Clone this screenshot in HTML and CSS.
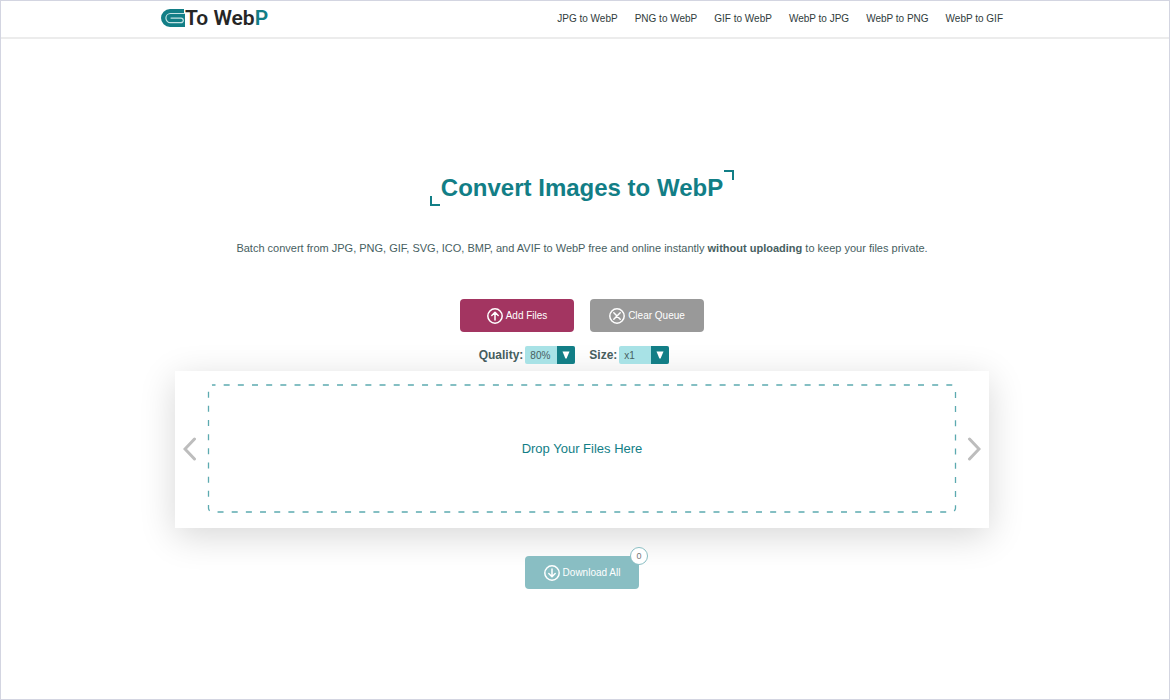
FILE: index.html
```html
<!DOCTYPE html>
<html lang="en">
<head>
<meta charset="utf-8">
<meta name="viewport" content="width=device-width, initial-scale=1">
<title>Convert Images to WebP</title>
<link rel="stylesheet" href="styles.css">
</head>
<body>
<header class="site-header">
  <div class="header-inner">
    <a class="logo" href="#" aria-label="To WebP">
      <svg class="logo-mark" viewBox="0 0 24 18" aria-hidden="true">
        <path d="M9 0H23V4H24V18H9A9 9 0 0 1 9 0Z" fill="#127e86"/>
        <path d="M24 4.500H9.500A4.600 4.600 0 0 0 9.500 13.700H20A2.300 2.300 0 0 0 20 9.100H10" fill="none" stroke="#c4e2e4" stroke-width="1.200" stroke-linecap="round"/>
      </svg>
      <span>To Web<span class="logo-accent">P</span></span>
    </a>
    <nav class="nav">
      <a href="#">JPG to WebP</a>
      <a href="#">PNG to WebP</a>
      <a href="#">GIF to WebP</a>
      <a href="#">WebP to JPG</a>
      <a href="#">WebP to PNG</a>
      <a href="#">WebP to GIF</a>
    </nav>
  </div>
</header>
<main class="main">
  <h1 class="title">Convert Images to WebP</h1>
  <p class="intro">Batch convert from JPG, PNG, GIF, SVG, ICO, BMP, and AVIF to WebP free and online instantly <strong>without uploading</strong> to keep your files private.</p>
  <div class="actions">
    <button class="button button-add" type="button">
      <svg class="icon" viewBox="0 0 16 16" aria-hidden="true"><circle cx="8" cy="8" r="7.200"/><path d="M8 12V4.500M4.800 7.500L8 4.300L11.200 7.500"/></svg>
      Add Files
    </button>
    <button class="button button-clear" type="button">
      <svg class="icon" viewBox="0 0 16 16" aria-hidden="true"><circle cx="8" cy="8" r="7.200"/><path d="M4.800 4.800L11.200 11.200M11.200 4.800L4.800 11.200"/></svg>
      Clear Queue
    </button>
  </div>
  <div class="options">
    <div class="option">
      <label for="quality">Quality:</label>
      <span class="picker">
        <select id="quality"><option>80%</option></select>
        <svg class="picker-arrow" viewBox="0 0 18 18" aria-hidden="true"><path d="M5.500 5.500H12.500L9.600 12.500H8.400Z"/></svg>
      </span>
    </div>
    <div class="option">
      <label for="size">Size:</label>
      <span class="picker">
        <select id="size"><option>x1</option></select>
        <svg class="picker-arrow" viewBox="0 0 18 18" aria-hidden="true"><path d="M5.500 5.500H12.500L9.600 12.500H8.400Z"/></svg>
      </span>
    </div>
  </div>
  <section class="queue">
    <button class="arrow" type="button" aria-label="Previous">
      <svg viewBox="0 0 14 24" aria-hidden="true"><path d="M11.500 2L2 12L11.500 22"/></svg>
    </button>
    <div class="drop">
      <svg class="drop-outline" aria-hidden="true"><rect x="1.500" y="1" rx="4"/></svg>
      Drop Your Files Here
    </div>
    <button class="arrow" type="button" aria-label="Next">
      <svg viewBox="0 0 14 24" aria-hidden="true"><path d="M2.500 2L12 12L2.500 22"/></svg>
    </button>
  </section>
  <button class="button button-download" type="button">
    <svg class="icon" viewBox="0 0 16 16" aria-hidden="true"><circle cx="8" cy="8" r="7.200"/><path d="M8 4V11.500M4.800 8.500L8 11.700L11.200 8.500"/></svg>
    Download All
    <span class="badge">0</span>
  </button>
</main>
</body>
</html>
```
FILE: styles.css
```css
*,
*::before,
*::after {
  box-sizing: border-box;
}

body {
  margin: 0;
  min-height: 100vh;
  border: 1px solid #d3d5e1;
  background: #fff;
  color: #47605f;
  font-family: "Liberation Sans", Arial, sans-serif;
  font-size: 11px;
}

button,
select {
  font-family: inherit;
}

.site-header {
  padding-right: 6px;
  border-bottom: 2px solid #ececec;
}

.header-inner {
  display: flex;
  align-items: center;
  justify-content: space-between;
  max-width: 842px;
  height: 36px;
  margin: 0 auto;
  padding-bottom: 2px;
}

.logo {
  display: flex;
  align-items: center;
  color: #262626;
  font-family: Roboto, sans-serif;
  font-size: 21px;
  font-weight: 600;
  line-height: 24px;
  text-decoration: none;
}

.logo-mark {
  width: 24px;
  height: 18px;
}

.logo-accent {
  color: #127e86;
}

.nav {
  display: flex;
  gap: 17px;
}

.nav a {
  color: #303c3c;
  font-size: 10px;
  text-decoration: none;
  white-space: nowrap;
}

.main {
  display: flex;
  flex-direction: column;
  align-items: center;
  padding: 131px 12px 24px 6px;
}

.title {
  position: relative;
  margin: 0;
  padding: 4px 11px;
  color: #127e86;
  font-size: 24px;
  line-height: 28px;
}

.title::before,
.title::after {
  content: "";
  position: absolute;
  width: 10px;
  height: 10px;
  border: 0 solid #127e86;
}

.title::before {
  left: 0;
  bottom: 0;
  border-width: 0 0 2px 2px;
}

.title::after {
  right: 0;
  top: 0;
  border-width: 2px 2px 0 0;
}

.intro {
  margin: 33px 0 0;
  line-height: 18px;
  text-align: center;
}

.actions {
  display: flex;
  gap: 16px;
  margin-top: 42px;
}

.button {
  position: relative;
  display: flex;
  align-items: center;
  justify-content: center;
  gap: 3px;
  width: 114px;
  height: 33px;
  padding: 0;
  border: 0;
  border-radius: 4px;
  color: #fff;
  font-size: 10px;
}

.button-add {
  background: #a33561;
}

.button-clear {
  background: #999;
}

.button-download {
  margin-top: 28px;
  background: #89bec3;
}

.icon {
  width: 16px;
  height: 16px;
  fill: none;
  stroke: #fff;
  stroke-width: 1.5;
  stroke-linecap: round;
  stroke-linejoin: round;
}

.options {
  display: flex;
  gap: 14px;
  margin-top: 14px;
  padding-right: 16px;
}

.option {
  display: flex;
  align-items: center;
  gap: 2px;
  font-size: 12px;
  font-weight: 700;
}

.picker {
  position: relative;
  display: flex;
}

.picker select {
  width: 50px;
  height: 18px;
  padding: 0 20px 0 5px;
  border: 0;
  border-radius: 2px;
  background: #a8e2e6;
  color: #47605f;
  font-size: 10px;
  appearance: none;
}

.picker-arrow {
  position: absolute;
  top: 0;
  right: 0;
  width: 18px;
  height: 18px;
  border-radius: 0 2px 2px 0;
  background: #127e86;
  fill: #fff;
  pointer-events: none;
}

.queue {
  display: flex;
  align-items: center;
  gap: 10px;
  width: 100%;
  max-width: 814px;
  margin-top: 7px;
  padding: 13px 8px 15px;
  background: #fff;
  box-shadow: 0 8px 34px rgba(0, 0, 0, 0.16);
}

.arrow {
  display: flex;
  padding: 0;
  border: 0;
  background: none;
}

.arrow svg {
  width: 14px;
  height: 24px;
  fill: none;
  stroke: #bdbdbd;
  stroke-width: 3;
  stroke-linecap: round;
}

.drop {
  position: relative;
  display: flex;
  flex: 1;
  align-items: center;
  justify-content: center;
  min-height: 129px;
  color: #127e86;
  font-size: 13px;
}

.drop-outline {
  position: absolute;
  inset: 0;
  width: 100%;
  height: 100%;
}

.drop-outline rect {
  width: calc(100% - 3px);
  height: calc(100% - 2px);
  fill: none;
  stroke: #5caab0;
  stroke-width: 1.3;
  stroke-dasharray: 6 8.17;
  stroke-dashoffset: 3;
}

.badge {
  position: absolute;
  top: -9px;
  right: -9px;
  width: 18px;
  height: 18px;
  border: 1px solid #89bec3;
  border-radius: 50%;
  background: #fff;
  color: #777;
  font-size: 9px;
  line-height: 16px;
  text-align: center;
}
```
